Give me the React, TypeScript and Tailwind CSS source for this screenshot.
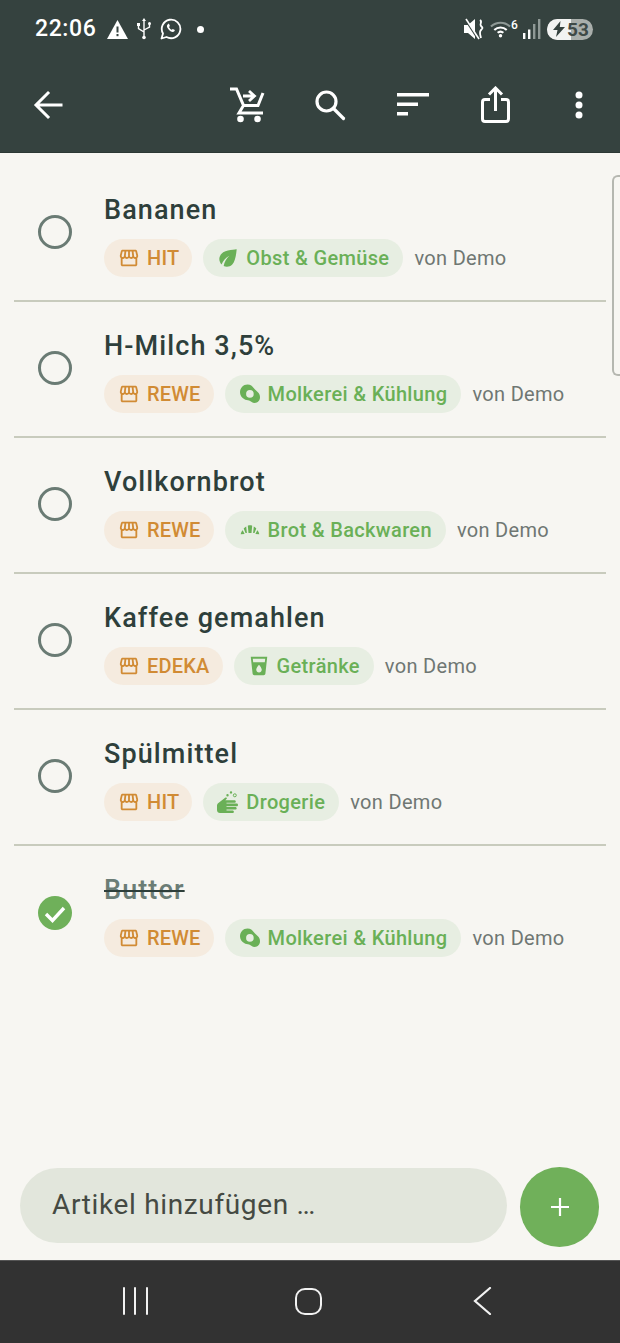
import React from "react";

const STORE = "M21.9 8.89l-1.05-4.37c-.22-.9-1-1.52-1.91-1.52H5.05c-.9 0-1.69.63-1.9 1.52L2.1 8.89c-.24 1.02-.02 2.06.62 2.88.08.11.19.19.28.29V19c0 1.1.9 2 2 2h14c1.1 0 2-.9 2-2v-6.94c.09-.09.2-.18.28-.28.64-.82.87-1.87.62-2.89zm-2.99-3.9l1.05 4.37c.1.42.01.84-.25 1.17-.14.18-.44.47-.94.47-.61 0-1.14-.49-1.21-1.14L16.98 5l1.93-.01zM13 5h1.96l.54 4.52c.05.39-.07.78-.33 1.07-.22.26-.54.41-.95.41-.67 0-1.22-.59-1.22-1.31V5zM8.49 9.52L9.04 5H11v4.69c0 .72-.55 1.31-1.29 1.31-.34 0-.65-.15-.89-.41-.25-.29-.37-.68-.33-1.07zm-4.45-.16L5.05 5h1.97l-.58 4.86c-.08.65-.6 1.14-1.21 1.14-.49 0-.8-.29-.93-.47-.27-.32-.36-.75-.26-1.17zM5 19v-6.03c.08.01.15.03.23.03.87 0 1.66-.36 2.24-.95.6.6 1.4.95 2.31.95.87 0 1.65-.36 2.23-.93.59.57 1.39.93 2.29.93.84 0 1.64-.35 2.24-.95.58.59 1.37.95 2.24.95.08 0 .15-.02.23-.03V19H5z";

function Icon({ size = 22, children }: { size?: number; children: React.ReactNode }) {
  return (
    <div className="flex h-[22px] w-[22px] shrink-0 items-center justify-center">
      <svg width={size} height={size} viewBox="0 0 24 24" fill="currentColor" className="shrink-0">
        {children}
      </svg>
    </div>
  );
}

const Leaf = () => (
  <Icon size={26}>
    <path d="M6.05 8.05c-2.73 2.73-2.73 7.15-.02 9.88 1.47-3.4 4.09-6.24 7.36-7.93-2.77 2.34-4.71 5.61-5.39 9.32 2.6 1.23 5.8.78 7.95-1.37C19.43 14.47 20 4 20 4S9.53 4.57 6.05 8.05z" />
  </Icon>
);
const Egg = () => (
  <Icon size={24}>
    <path
      fillRule="evenodd"
      d="M9.500 2.500c3.200 0 4.800 1.600 6.200 3.600 1.100 1.600 2.600 2.600 4.200 4.200 1.400 1.400 2.100 3.100 2.100 5 0 3.200-2.300 5.700-5.300 5.700-2.600 0-3.500-1.800-5.600-2.500-1.500-.5-3.400-.4-5-1.500C3.600 15.600 2 13.200 2 10.300 2 6 5.300 2.500 9.500 2.500zm2.400 5.600a3.800 3.800 0 1 0 0 7.600 3.800 3.800 0 0 0 0-7.600z"
    />
  </Icon>
);
const Bread = () => (
  <Icon size={24}>
    <path d="M9.800 7.700c1.400-.5 3-.5 4.400 0l-.7 7.300h-3zM8.200 8.400c-1 .5-1.900 1.300-2.500 2.200l1.800 4.400h1.400zM15.800 8.400c1 .5 1.900 1.300 2.500 2.200L16.500 15h-1.400zM4.700 12.200C3.700 13.200 3 14.600 2.700 16.200l3.900-.3zM19.300 12.200c1 1 1.700 2.400 2 4l-3.900-.3z" />
  </Icon>
);
const Drink = () => (
  <Icon size={22}>
    <path d="M3 2l2.010 18.230C5.130 21.230 5.970 22 7 22h10c1.030 0 1.870-.77 1.990-1.770L21 2H3zm9 17c-1.660 0-3-1.340-3-3 0-2 3-5.400 3-5.400s3 3.400 3 5.400c0 1.660-1.340 3-3 3zm6.330-11H5.670l-.44-4h13.530l-.43 4z" />
  </Icon>
);
const Soap = () => (
  <Icon size={24}>
    <path d="M9.500 7.500 2.400 12.900C1.500 13.600 1 14.500 1 15.600V20c0 1.700 1.300 3 3 3h12.500c.8 0 1.400-.6 1.400-1.300 0-.7-.6-1.300-1.400-1.300H10.500v-.8h8.800c.8 0 1.400-.6 1.400-1.300s-.6-1.300-1.400-1.300h-8.800v-.8h10.200c.8 0 1.300-.6 1.300-1.300s-.5-1.300-1.300-1.300H10.500v-.8h8c.8 0 1.300-.6 1.300-1.300s-.5-1.300-1.300-1.300H9.300l1.400-1.400c.3-.3.300-.7.100-1zM15 1.200a1.200 1.200 0 1 0 0 2.400 1.200 1.200 0 0 0 0-2.400zM11.500 4a1.200 1.200 0 1 0 0 2.400 1.200 1.200 0 0 0 0-2.400z" />
    <circle cx="18.800" cy="5.300" r="1.500" fill="none" stroke="currentColor" strokeWidth="1" />
  </Icon>
);

const Back = () => (
  <svg width="30" height="30" viewBox="0 0 30 30" fill="none" stroke="white" strokeWidth="3" strokeLinecap="square">
    <path d="M28 15H4M15 3 3 15l12 12" />
  </svg>
);
const Cart = () => (
  <svg width="36" height="38" viewBox="0 0 36 38" fill="none" stroke="white" strokeWidth="3">
    <path d="M1 3h6.500l7 16.500L10 27h24M34 7l-5 12.500H14.500" />
    <path d="M14 10h11M20 5l5.500 5-5.500 5" strokeWidth="2.800" />
    <circle cx="11.500" cy="33" r="3.300" fill="white" stroke="none" />
    <circle cx="28.500" cy="33" r="3.300" fill="white" stroke="none" />
  </svg>
);
const Search = () => (
  <svg width="32" height="32" viewBox="0 0 32 32" fill="none" stroke="white" strokeWidth="3.200">
    <circle cx="12.500" cy="12.500" r="9.500" />
    <path d="m19.500 19.500 10 10" strokeLinecap="round" />
  </svg>
);
const Sort = () => (
  <svg width="32" height="26" viewBox="0 0 32 26" fill="white">
    <rect x="0" y="1" width="32" height="3.500" />
    <rect x="0" y="10.500" width="21" height="3.500" />
    <rect x="0" y="20" width="11" height="3.500" />
  </svg>
);
const Share = () => (
  <svg width="30" height="38" viewBox="0 0 30 38" fill="none" stroke="white" strokeWidth="3">
    <path d="M9 13.500H4A2.500 2.500 0 0 0 1.500 16v17A2.500 2.500 0 0 0 4 35.500h21a2.500 2.500 0 0 0 2.500-2.500V16a2.500 2.500 0 0 0-2.500-2.500h-5" />
    <path d="M14.500 25V3M8 8.500 14.500 2 21 8.500" />
  </svg>
);
const More = () => (
  <svg width="10" height="30" viewBox="0 0 10 30" fill="white">
    <circle cx="5" cy="5" r="3.500" />
    <circle cx="5" cy="15" r="3.500" />
    <circle cx="5" cy="25" r="3.500" />
  </svg>
);

const Warn = () => (
  <svg width="21" height="19" viewBox="0 0 21 19">
    <path d="M10.500 0 21 19H0z" fill="white" />
    <rect x="9.500" y="6.500" width="2" height="6" fill="#35423f" />
    <rect x="9.500" y="14" width="2" height="2.200" fill="#35423f" />
  </svg>
);
const Usb = () => (
  <svg width="14" height="22" viewBox="0 0 14 22" fill="none" stroke="white" strokeWidth="1.400">
    <path d="M7 2v17M1.500 7v3.500L7 14M12.500 6v3L7 12" />
    <path d="M7 0 9 3H5z" fill="white" stroke="none" />
    <circle cx="7" cy="19.500" r="1.800" fill="white" stroke="none" />
    <rect x="0" y="5" width="3" height="3" fill="white" stroke="none" />
    <circle cx="12.500" cy="5.500" r="1.500" fill="white" stroke="none" />
  </svg>
);
const WhatsApp = () => (
  <svg width="22" height="22" viewBox="0 0 22 22" fill="none">
    <path d="M1.500 20.500 3 15.500A9.300 9.300 0 1 1 6.500 19z" stroke="white" strokeWidth="1.800" strokeLinejoin="round" />
    <path d="M7.800 6.200c-1.300 1-1.200 2.800.4 4.800 1.600 2 3.500 3.200 5 2.900 1-.2 1.700-1 1.600-1.800l-2-1.200-1 .9c-1-.4-2.400-1.800-2.800-2.900l.9-1-1-2.500z" fill="white" />
  </svg>
);
const Mute = () => (
  <svg width="21" height="22" viewBox="0 0 21 22">
    <path d="M0 7h4l7-6v20l-7-6H0z" fill="white" />
    <path d="M1 1l13 20" stroke="#35423f" strokeWidth="2" />
    <path d="M2 1l13 20" stroke="white" strokeWidth="1.600" />
    <path d="M16 2c3 2-1 4 1 6s2 2 0 4-1 4 0 8" fill="none" stroke="white" strokeWidth="1.800" />
  </svg>
);
const Wifi = () => (
  <svg width="21" height="18" viewBox="0 0 22 18" fill="none" strokeWidth="2.200">
    <path d="M1 6.500a14.500 14.500 0 0 1 20 0" stroke="#8f9996" />
    <path d="M4.500 10a9.500 9.500 0 0 1 13 0" stroke="white" />
    <path d="M8 13a4.500 4.500 0 0 1 6 0" stroke="white" />
    <circle cx="11" cy="16" r="1.800" fill="white" stroke="none" />
  </svg>
);
const Signal = () => (
  <svg width="18" height="20" viewBox="0 0 18 20">
    <rect x="0" y="14" width="2.400" height="6" fill="white" />
    <rect x="5" y="10.500" width="2.400" height="9.500" fill="white" />
    <rect x="10" y="5" width="2.400" height="15" fill="#8f9996" />
    <rect x="15" y="0" width="2.400" height="20" fill="#8f9996" />
  </svg>
);

function Row({
  title,
  store,
  cat,
  icon,
  done,
  last,
}: {
  title: string;
  store: string;
  cat: string;
  icon: React.ReactNode;
  done?: boolean;
  last?: boolean;
}) {
  return (
    <div className={`mx-[14px] flex h-[136px] items-center pl-[24px] ${last ? "" : "border-b-2 border-[#c8cbbd]"}`}>
      <div className="mb-[2px] mr-[32px] shrink-0">
        {done ? (
          <svg width="34" height="34" viewBox="0 0 34 34">
            <circle cx="17" cy="17" r="17" fill="#6fb05a" />
            <path d="M8 18l6.500 6.500L26 12" fill="none" stroke="white" strokeWidth="3.400" />
          </svg>
        ) : (
          <div className="h-[34px] w-[34px] rounded-full border-[3.500px] border-[#6a7b74]" />
        )}
      </div>
      <div className="flex h-full flex-col pt-[28px]">
        <div
          className={`h-[32px] text-[27px] leading-[32px] font-medium tracking-[1.1px] ${
            done ? "text-[#6b7d76] line-through decoration-[#2e3f3b] decoration-2" : "text-[#2e3f3b]"
          }`}
        >
          {title}
        </div>
        <div className="mt-[13px] flex items-center">
          <div className="flex h-[38px] items-center gap-[7px] rounded-full bg-[#f5ebdf] pl-[14px] pr-[13px] text-[20px] font-medium tracking-[0.2px] text-[#d18b34]">
            <Icon size={22}>
              <path d={STORE} />
            </Icon>
            {store}
          </div>
          <div className="ml-[11px] flex h-[38px] items-center gap-[7px] rounded-full bg-[#e7eee2] px-[14px] text-[20px] font-medium tracking-[0.34px] text-[#6ab057]">
            {icon}
            {cat}
          </div>
          <div className="ml-[11px] text-[20px] tracking-[0.32px] text-[#6f7773]">von Demo</div>
        </div>
      </div>
    </div>
  );
}

export default function App() {
  return (
    <div className="relative flex h-[1343px] w-[620px] flex-col overflow-hidden bg-[#f7f6f2] font-['Roboto',sans-serif]">
      <header className="h-[153px] shrink-0 border-b border-[#2c3835] bg-[#35423f]">
        <div className="flex h-[58px] items-center justify-between pl-[35px] pr-[27px]">
          <div className="flex items-center text-white">
            <span className="w-[72px] text-[23px] font-medium tracking-[0.6px]">22:06</span>
            <Warn />
            <span className="ml-[9px]">
              <Usb />
            </span>
            <span className="ml-[9px]">
              <WhatsApp />
            </span>
            <span className="ml-[15px] h-[7px] w-[7px] rounded-full bg-white" />
          </div>
          <div className="flex items-center">
            <Mute />
            <div className="ml-[5px] flex items-start">
              <Wifi />
              <span className="-mt-[2px] w-[8px] text-[12px] leading-[14px] font-medium text-white">6</span>
            </div>
            <span className="ml-[4px]">
              <Signal />
            </span>
            <div className="ml-[6px] flex h-[21px] w-[46px] overflow-hidden rounded-full bg-[#a9aeab]">
              <div className="flex w-[24px] shrink-0 items-center justify-center bg-[#f2f3f2]">
                <svg width="12" height="16" viewBox="0 0 12 16">
                  <path d="M7.500 0 0 9h4.500L3 16l9-10H6.800z" fill="#35423f" />
                </svg>
              </div>
              <span className="relative -ml-[4px] text-[19px] leading-[21px] font-bold text-[#3f4a47]">53</span>
            </div>
          </div>
        </div>
        <div className="flex h-[94px] items-center">
          <div className="ml-[6px] flex w-[84px] items-center justify-center">
            <Back />
          </div>
          <div className="flex-1" />
          {[<Cart key="c" />, <Search key="s" />, <Sort key="o" />, <Share key="h" />, <More key="m" />].map((el, i) => (
            <div key={i} className="flex w-[83px] items-center justify-center">
              {el}
            </div>
          ))}
        </div>
      </header>

      <main className="min-h-0 flex-1 pt-[13px]">
        <Row title="Bananen" store="HIT" cat="Obst & Gemüse" icon={<Leaf />} />
        <Row title="H-Milch 3,5%" store="REWE" cat="Molkerei & Kühlung" icon={<Egg />} />
        <Row title="Vollkornbrot" store="REWE" cat="Brot & Backwaren" icon={<Bread />} />
        <Row title="Kaffee gemahlen" store="EDEKA" cat="Getränke" icon={<Drink />} />
        <Row title="Spülmittel" store="HIT" cat="Drogerie" icon={<Soap />} />
        <Row title="Butter" store="REWE" cat="Molkerei & Kühlung" icon={<Egg />} done last />
      </main>

      <div className="flex h-[107px] shrink-0 items-start gap-[13px] pl-[20px] pr-[21px] pt-[14px]">
        <div className="mt-[1px] flex h-[75px] flex-1 items-center rounded-full bg-[#e2e6dc] pb-[1px] pl-[32px] text-[28px] tracking-[0.65px] text-[#454a43]">
          Artikel hinzufügen …
        </div>
        <div className="flex h-[80px] w-[79px] shrink-0 items-center justify-center rounded-full bg-[#70b05a]">
          <svg width="20" height="20" viewBox="0 0 20 20" stroke="white" strokeWidth="2.200">
            <path d="M10 1v18M1 10h18" />
          </svg>
        </div>
      </div>

      <nav className="flex h-[83px] shrink-0 items-center border-t border-[#555] bg-[#323232] pb-[2px]">
        <div className="flex w-[270px] justify-center">
          <svg width="28" height="28" viewBox="0 0 28 28" stroke="#f2f2f2" strokeWidth="2">
            <path d="M3 1v26M14 1v26M26 1v26" strokeLinecap="round" />
          </svg>
        </div>
        <div className="flex w-[77px] justify-center">
          <div className="h-[27px] w-[27px] rounded-[10px] border-2 border-[#f2f2f2]" />
        </div>
        <div className="ml-[125px] flex justify-center">
          <svg width="20" height="28" viewBox="0 0 20 28" fill="none" stroke="#f2f2f2" strokeWidth="2.200" strokeLinecap="round">
            <path d="M18 1 3 14l15 13" />
          </svg>
        </div>
      </nav>

      <div className="absolute right-0 top-[175px] h-[201px] w-[8px] rounded-l-[6px] border-y-2 border-l-2 border-[#b5b7b0]" />
    </div>
  );
}
